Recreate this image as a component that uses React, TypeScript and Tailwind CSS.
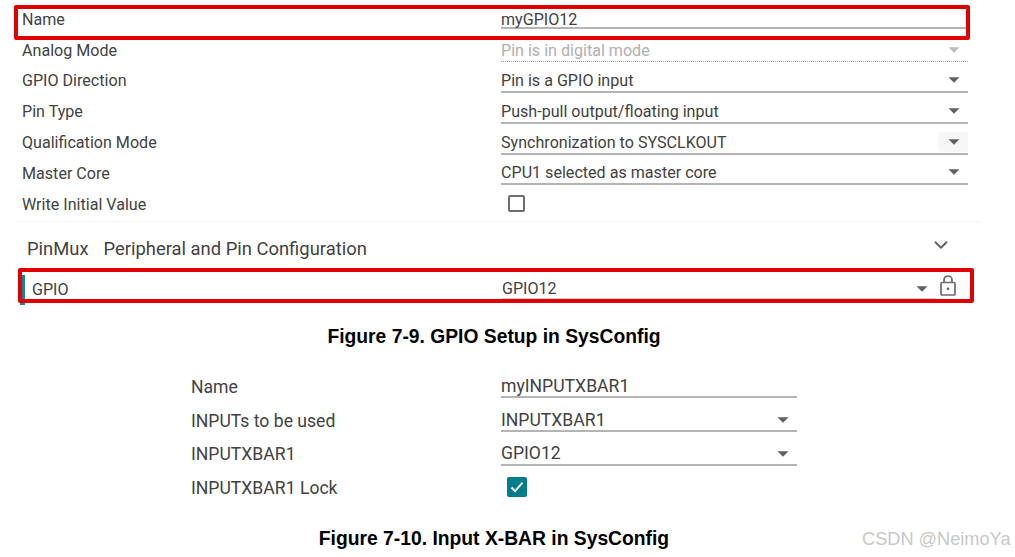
import { ChevronDown } from "lucide-react";

function Caret({ light }: { light?: boolean }) {
  return (
    <svg width="12" height="6" viewBox="0 0 12 6" className="shrink-0">
      <path d="M0.5 0.2h11L6 5.8z" fill={light ? "#bdbdbd" : "#616161"} />
    </svg>
  );
}

function LockIcon() {
  return (
    <svg width="18" height="22" viewBox="0 0 18 22" fill="none" stroke="#6b6b6b" strokeWidth="1.7">
      <rect x="2" y="7.5" width="14" height="12.5" rx="1" />
      <path d="M5 7.5V5a4 4 0 0 1 8 0v2.5" />
      <circle cx="9" cy="13.8" r="1.4" fill="#6b6b6b" stroke="none" />
    </svg>
  );
}

function SelectRow({ label, value, disabled, hover }: { label: string; value: string; disabled?: boolean; hover?: boolean }) {
  return (
    <div className="flex h-[30.8px] items-center">
      <div className="w-[479px] shrink-0 pt-[1px] text-[#424242]">{label}</div>
      <div
        className={`flex h-[24px] w-[467px] items-center justify-between ${
          disabled ? "border-b border-dotted border-[#9e9e9e] text-[#b0b0b0]" : "border-b-2 border-[#b4b4b4] text-[#424242]"
        }`}
      >
        <span className="pt-[2px]">{value}</span>
        <span className={`flex h-[20px] w-[30px] items-center justify-center rounded-l-[4px] pl-[2px] ${hover ? "bg-[#f7f7f7]" : ""}`}>
          <Caret light={disabled} />
        </span>
      </div>
    </div>
  );
}

function SmallRow({ label, value, caret = true }: { label: string; value: string; caret?: boolean }) {
  return (
    <div className="flex h-[33.6px] items-center">
      <div className="w-[310px] shrink-0 text-[#424242]">{label}</div>
      <div className="flex h-[22px] w-[296px] items-center justify-between border-b-2 border-[#b4b4b4] text-[#424242]">
        <span>{value}</span>
        {caret && (
          <span className="mr-[8px]">
            <Caret />
          </span>
        )}
      </div>
    </div>
  );
}

const mainRows = [
  { label: "Analog Mode", value: "Pin is in digital mode", disabled: true },
  { label: "GPIO Direction", value: "Pin is a GPIO input" },
  { label: "Pin Type", value: "Push-pull output/floating input" },
  { label: "Qualification Mode", value: "Synchronization to SYSCLKOUT", hover: true },
  { label: "Master Core", value: "CPU1 selected as master core" },
];

export default function App() {
  return (
    <div className="relative h-[557px] w-[1015px] overflow-hidden bg-white font-['Roboto',sans-serif] text-[16.1px]">
      <div className="pl-[22px] pt-[4px]">
        <div className="flex h-[30.8px] items-start pt-[6px]">
          <div className="w-[479px] shrink-0 leading-[19px] text-[#424242]">Name</div>
          <div className="h-[19px] w-[467px] border-b-2 border-[#b4b4b4] leading-[19px] text-[#424242]">myGPIO12</div>
        </div>
        {mainRows.map((row) => (
          <SelectRow key={row.label} {...row} />
        ))}
        <div className="flex h-[30.8px] items-center">
          <div className="w-[479px] shrink-0 pt-[1px] text-[#424242]">Write Initial Value</div>
          <div className="mb-[2px] ml-[7px] h-[17px] w-[17px] rounded-[2px] border-2 border-[#6e6e6e]" />
        </div>
      </div>

      <div className="ml-[15px] mt-[1px] h-[1px] w-[965px] bg-[#f4f4f4]" />

      <div className="flex h-[50px] w-[952px] items-center pl-[27px] text-[18.4px] text-[#424242]">
        <span className="pt-[4px]">PinMux</span>
        <span className="ml-[15px] pt-[4px]">Peripheral and Pin Configuration</span>
        <ChevronDown className="mb-[3px] ml-auto h-[22px] w-[22px] text-[#616161]" strokeWidth={2} />
      </div>

      <div className="ml-[20px] mt-[3px] flex h-[30px] w-[950px] border-l-[5px] border-[#1f7f94]">
        <div className="w-[477px] shrink-0 pl-[7px] pt-[5px] leading-[19px] text-[#424242]">GPIO</div>
        <div className="flex h-[24px] w-[434px] items-end justify-between border-b border-[#d0d0d0] text-[#424242]">
          <span className="leading-[19px]">GPIO12</span>
          <span className="mb-[6px] mr-[8px]">
            <Caret />
          </span>
        </div>
        <span className="ml-[3px]">
          <LockIcon />
        </span>
      </div>

      <div className="mt-[21px] w-[988px] text-center font-['Liberation_Sans',sans-serif] text-[19.3px] font-bold leading-[22px] text-black">
        Figure 7-9. GPIO Setup in SysConfig
      </div>

      <div className="mt-[23px] pl-[191px] text-[17.6px]">
        <SmallRow label="Name" value="myINPUTXBAR1" caret={false} />
        <SmallRow label="INPUTs to be used" value="INPUTXBAR1" />
        <SmallRow label="INPUTXBAR1" value="GPIO12" />
        <div className="flex h-[33.6px] items-center">
          <div className="w-[316px] shrink-0 text-[#424242]">INPUTXBAR1 Lock</div>
          <div className="mb-[3px] flex h-[20px] w-[20px] items-center justify-center rounded-[2px] bg-[#007c8c]">
            <svg width="14" height="12" viewBox="0 0 14 12" fill="none" stroke="#ffffff" strokeWidth="2">
              <path d="M1.5 6.5l3.6 3.6 7.4-8.4" />
            </svg>
          </div>
        </div>
      </div>

      <div className="mt-[23px] w-[988px] text-center font-['Liberation_Sans',sans-serif] text-[19.3px] font-bold leading-[22px] text-black">
        Figure 7-10. Input X-BAR in SysConfig
      </div>

      {/* red highlight boxes sit over the rows */}
      <div className="absolute left-[14px] top-[5px] h-[35px] w-[956px] rounded-[2px] border-[4px] border-[#e00000]" />
      <div className="absolute left-[18px] top-[268px] h-[35px] w-[956px] rounded-[2px] border-[4px] border-[#e00000]" />

      {/* watermark */}
      <div className="absolute left-[862px] top-[529px] font-['Liberation_Sans',sans-serif] text-[18.2px] leading-[20px] text-[#c8c8c8]">
        CSDN @NeimoYa
      </div>
    </div>
  );
}
